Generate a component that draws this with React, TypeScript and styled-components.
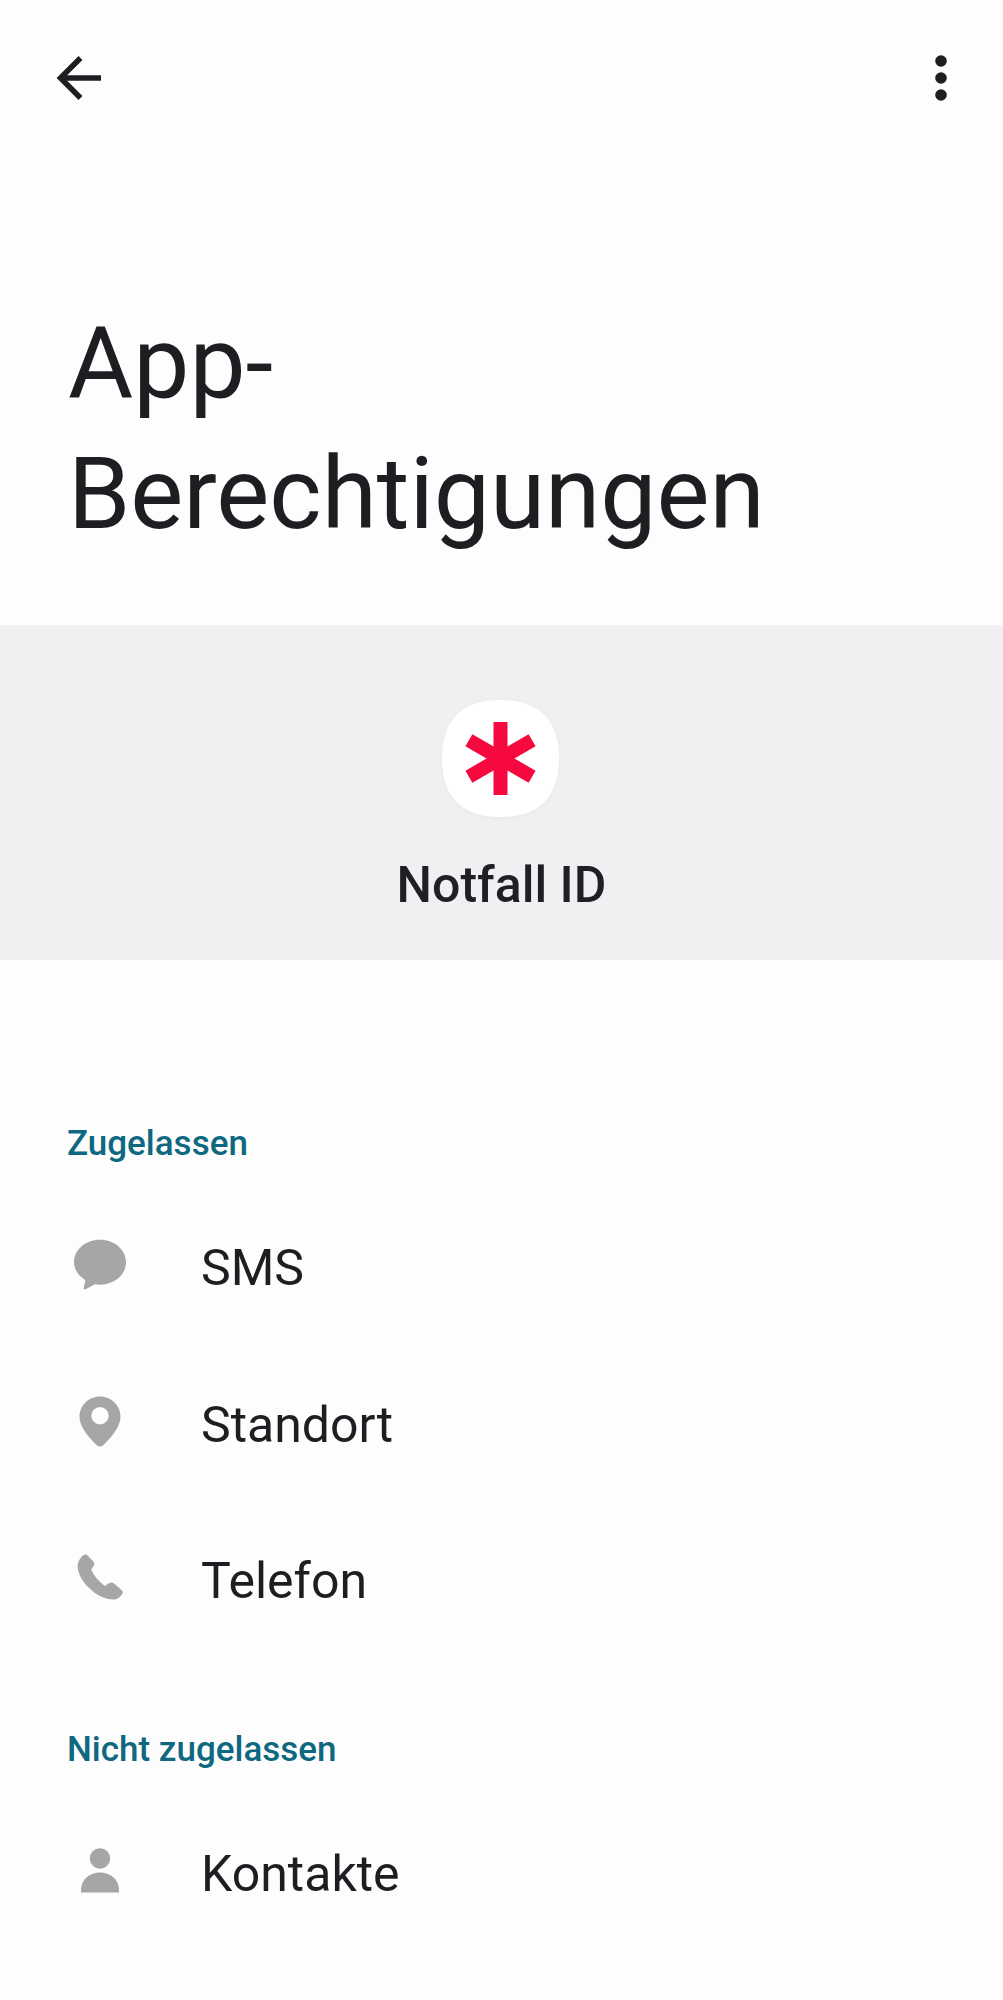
import React from 'react';
import styled, {createGlobalStyle} from 'styled-components';

const GlobalStyle = createGlobalStyle`
  html, body {
    margin: 0;
    padding: 0;
    background-color: #fdfdfd;
  }

  body {
    font-family: Roboto, "Liberation Sans", sans-serif;
    color: #1c1e21;
  }
`;

const BackIcon = () => (
    <svg width="72" height="72" viewBox="0 0 72 72" fill="none" stroke="#1c1e21" strokeWidth="5.500">
        <path d="M60 36H20"/>
        <path d="M39.500 16 19.500 36 39.500 56"/>
    </svg>
);

const MoreIcon = () => (
    <svg width="40" height="72" viewBox="0 0 40 72" fill="#1c1e21">
        <circle cx="20" cy="19" r="5.800"/>
        <circle cx="20" cy="36" r="5.800"/>
        <circle cx="20" cy="53" r="5.800"/>
    </svg>
);

const AppLogo = () => (
    <svg width="117" height="117" viewBox="0 0 117 117">
        <path fill="#fff" d="M58.500 0C97 0 117 20 117 58.500S97 117 58.500 117 0 97 0 58.500 20 0 58.500 0Z"/>
        <g fill="#f5093f">
            <rect x="51.500" y="22" width="14" height="73"/>
            <rect x="51.500" y="22" width="14" height="73" transform="rotate(60 58.500 58.500)"/>
            <rect x="51.500" y="22" width="14" height="73" transform="rotate(120 58.500 58.500)"/>
        </g>
    </svg>
);

const icons: Record<string, React.ReactNode> = {
    sms: (
        <path d="M36 8.700c14.400 0 26 10 26 22.500 0 12.400-11.600 22.500-26 22.500-1.800 0-3.400-.1-5-.4l-9.500 5c-1.100.6-2.200-.3-1.800-1.500l1.800-7.600C14.800 45.100 10 38.600 10 31.200 10 18.700 21.600 8.700 36 8.700Z"/>
    ),
    location: (
        <path fillRule="evenodd" d="M36 8.500c11.300 0 20.500 9 20.500 20.300 0 10.700-10.500 21.900-17.300 28.400-1.800 1.700-4.600 1.700-6.400 0C26 50.700 15.500 39.500 15.500 28.800 15.500 17.500 24.700 8.500 36 8.500Zm0 10.500a8.700 8.700 0 1 0 0 17.400 8.700 8.700 0 0 0 0-17.400Z"/>
    ),
    phone: (
        <path d="M19.300 11.300c1.500-1 3.200-1 4.400.3l5.400 5.600c1.300 1.300 1.500 3.300.5 4.800l-2.400 3.600c2.800 6.500 7.400 12 13.500 16.300l4.600-2.800c1.500-.9 3.400-.7 4.700.5l7.600 6.400c1.400 1.300 1.500 3.400.2 4.800-1.900 2.200-4.400 4.600-7.500 4.700-8.800.3-17.500-3.800-25.200-11.400C18 37 13.800 29.300 13.700 22.500c-.1-4.400 2.300-8.500 5.600-11.200Z"/>
    ),
    person: (
        <>
            <circle cx="36" cy="21.500" r="10.200"/>
            <path d="M17 55.500v-3C17 42.500 26 35.500 36 35.500s19 7 19 17v3Z"/>
        </>
    ),
};

interface PermissionProps {
    icon: string;
    label: string;
}

const Permission = ({icon, label}: PermissionProps) => (
    <StyledRow>
        <svg width="72" height="72" viewBox="0 0 72 72" fill="#a6a6a6">{icons[icon]}</svg>
        <StyledRowText>{label}</StyledRowText>
    </StyledRow>
);

export default function App() {
    return (
        <StyledPage>
            <GlobalStyle/>
            <StyledToolbar>
                <BackIcon/>
                <MoreIcon/>
            </StyledToolbar>
            <StyledTitle>App-<br/>Berechtigungen</StyledTitle>
            <StyledBand>
                <StyledAppIcon><AppLogo/></StyledAppIcon>
                <StyledAppName>Notfall ID</StyledAppName>
            </StyledBand>
            <StyledList>
                <StyledHeading>Zugelassen</StyledHeading>
                <Permission icon="sms" label="SMS"/>
                <Permission icon="location" label="Standort"/>
                <Permission icon="phone" label="Telefon"/>
                <StyledHeading>Nicht zugelassen</StyledHeading>
                <Permission icon="person" label="Kontakte"/>
            </StyledList>
        </StyledPage>
    );
}

const StyledPage = styled.div`
  width: 1003px;
  height: 2000px;
  overflow: hidden;
  background-color: #fdfdfd;
`;

const StyledToolbar = styled.header`
  display: flex;
  align-items: center;
  justify-content: space-between;
  height: 72px;
  padding: 42px 42px 0 41px;
`;

const StyledTitle = styled.h1`
  margin: 0;
  padding: 185px 0 0 68px;
  height: 326px;
  font-size: 100px;
  font-weight: 400;
  line-height: 130px;
`;

const StyledBand = styled.section`
  display: flex;
  flex-direction: column;
  align-items: center;
  height: 335px;
  padding-top: 75px;
  box-sizing: border-box;
  background-color: #f0f0f2;
`;

const StyledAppIcon = styled.div`
  width: 117px;
  height: 117px;
  margin-left: -2px;
  filter: drop-shadow(0 1px 2px rgba(0, 0, 0, .03));
`;

const StyledAppName = styled.div`
  margin-top: 38px;
  font-size: 50px;
  font-weight: 500;
  line-height: 60px;
  color: #1f2023;
`;

const StyledList = styled.section`
  display: flex;
  flex-direction: column;
  padding-top: 93px;
`;

const StyledHeading = styled.h2`
  margin: 0;
  height: 136px;
  box-sizing: border-box;
  padding: 71px 0 0 67px;
  font-size: 35px;
  font-weight: 500;
  line-height: 40px;
  color: #0d6880;
`;

const StyledRow = styled.div`
  display: flex;
  align-items: center;
  gap: 65px;
  height: 156.5px;
  padding-left: 64px;
`;

const StyledRowText = styled.span`
  padding-top: 2px;
  font-size: 50px;
  line-height: 60px;
`;
